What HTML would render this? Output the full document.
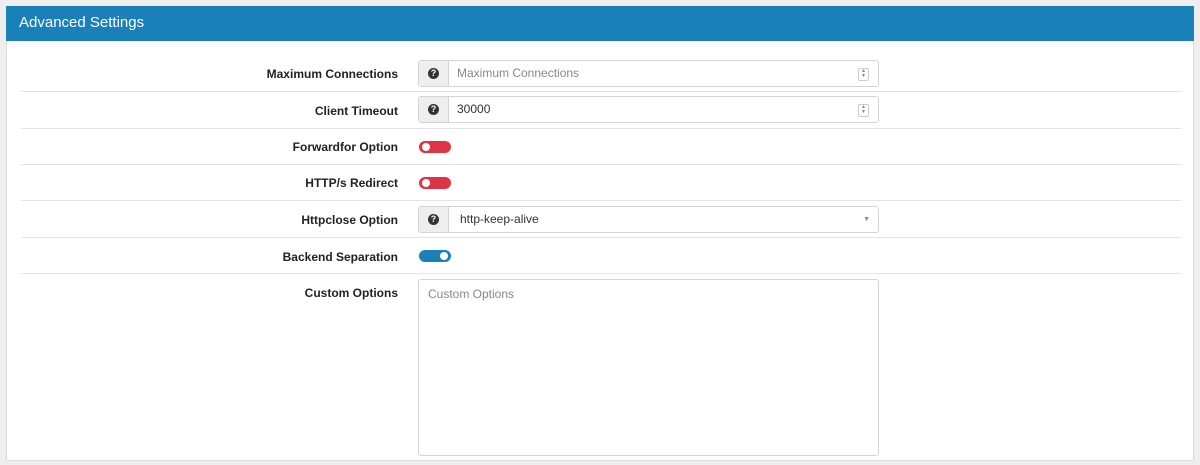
<!DOCTYPE html>
<html><head><style>
body{margin:0;background:#eeeeee;font-family:"Liberation Sans",sans-serif;width:1200px;height:465px;overflow:hidden;position:relative}
.panel{position:absolute;left:6px;top:6px;width:1188px;height:455px;background:#fff;border:1px solid #ddd;box-sizing:border-box}
.hd{height:35px;background:#1a80b9;color:#fff;font-size:15px;line-height:33px;padding-left:13px;margin:-1px -1px 0}
.row{position:absolute;left:14px;width:1160px;border-bottom:1px solid #e3e3e3}
.lbl{position:absolute;right:783px;width:380px;text-align:right;font-size:12px;font-weight:bold;color:#222}
.ig{position:absolute;left:397px;width:461px;height:27px;border:1px solid #d4d4d4;border-radius:3px;box-sizing:border-box;display:flex}
.ad{width:29px;background:#eee;border-right:1px solid #d4d4d4;display:flex;align-items:center;justify-content:center}
.q{width:11px;height:11px;border-radius:50%;background:#333;color:#fff;font-size:9px;font-weight:bold;text-align:center;line-height:11px}
.tx{flex:1;font-size:12px;line-height:25px;padding-left:8px;color:#333;position:relative}
.ph{color:#888}
.tg{position:absolute;left:398px;width:32px;height:12px;border-radius:6px}
.tg i{position:absolute;top:2px;width:8px;height:8px;border-radius:50%;background:#fff}
.spin{position:absolute;right:9px;top:7px;width:9px;height:11px;border:1px solid #ccc;border-radius:2px;font-size:6px;color:#888;line-height:5px;text-align:center}
</style></head><body>
<div class="panel">
<div class="hd">Advanced Settings</div>
<div class="row" style="top:35px;height:49px"><div class="lbl" style="top:25px">Maximum Connections</div>
<div class="ig" style="top:18px"><div class="ad"><div class="q">?</div></div><div class="tx ph">Maximum Connections<div class="spin">▴<br>▾</div></div></div></div>
<div class="row" style="top:85px;height:36px"><div class="lbl" style="top:12px">Client Timeout</div>
<div class="ig" style="top:4px"><div class="ad"><div class="q">?</div></div><div class="tx">30000<div class="spin">▴<br>▾</div></div></div></div>
<div class="row" style="top:122px;height:35px"><div class="lbl" style="top:11px">Forwardfor Option</div>
<div class="tg" style="top:12px;background:#dc3545"><i style="left:3px"></i></div></div>
<div class="row" style="top:158px;height:35px"><div class="lbl" style="top:11px">HTTP/s Redirect</div>
<div class="tg" style="top:12px;background:#dc3545"><i style="left:3px"></i></div></div>
<div class="row" style="top:194px;height:36px"><div class="lbl" style="top:12px">Httpclose Option</div>
<div class="ig" style="top:5px"><div class="ad"><div class="q">?</div></div><div class="tx" style="padding-left:11px">http-keep-alive<span style="position:absolute;right:8px;top:0;font-size:7px;color:#888">▼</span></div></div></div>
<div class="row" style="top:231px;height:35px"><div class="lbl" style="top:12px">Backend Separation</div>
<div class="tg" style="top:12px;background:#1a80b9"><i style="left:21px"></i></div></div>
<div style="position:absolute;left:14px;top:267px;width:1160px;height:180px">
<div class="lbl" style="top:12px">Custom Options</div>
<div style="position:absolute;left:397px;top:5px;width:461px;height:177px;border:1px solid #d4d4d4;border-radius:3px;box-sizing:border-box;font-size:12px;color:#888;padding:7px 9px">Custom Options</div></div>
</div>
</body></html>
